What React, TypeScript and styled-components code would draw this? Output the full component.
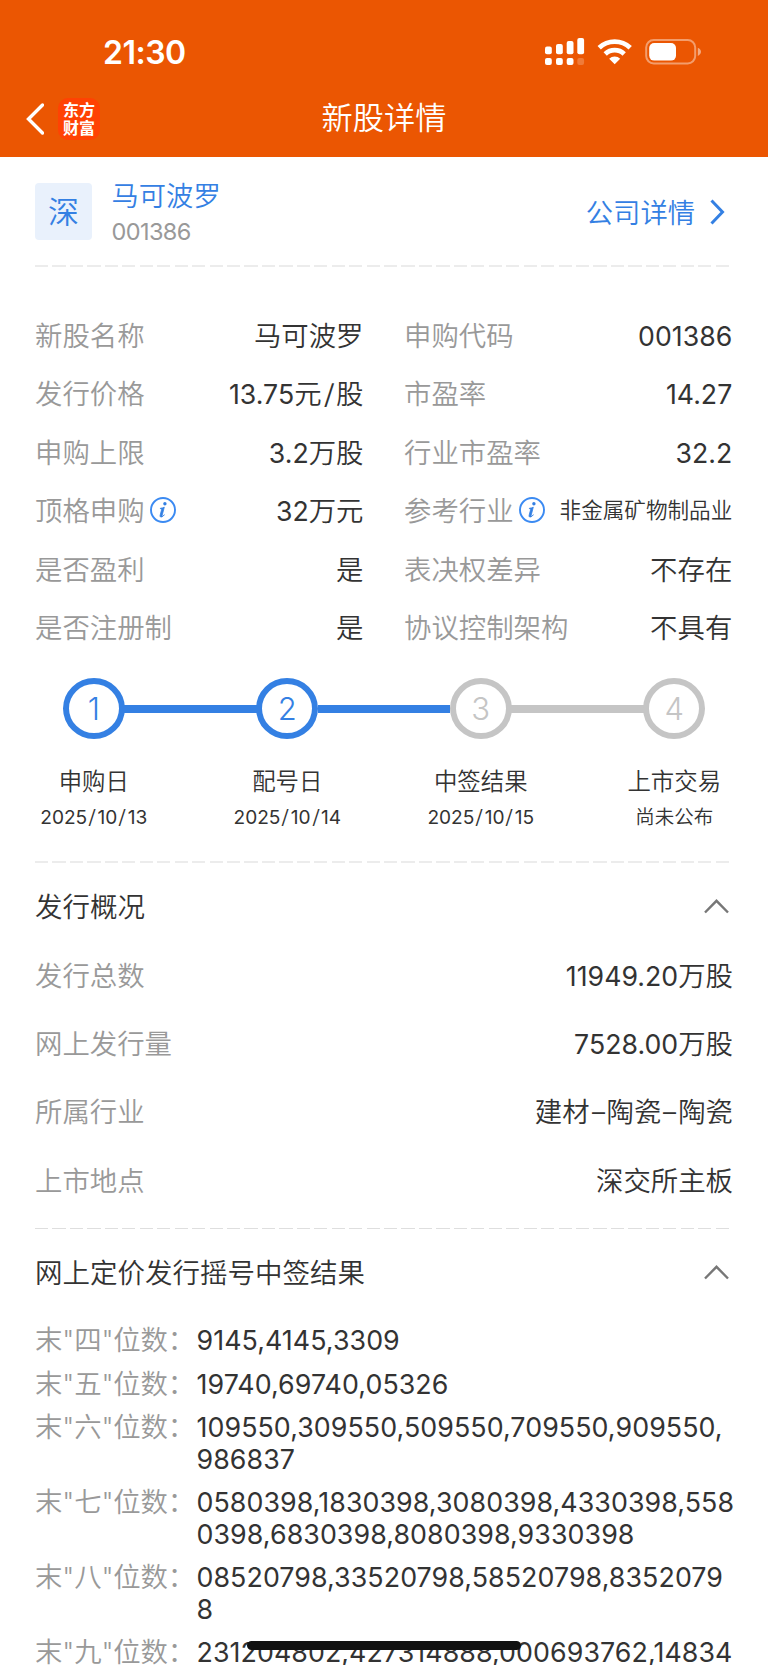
import React from "react";
import styled, { createGlobalStyle } from "styled-components";

const BLUE = "#3480e3";
const GREY = "#999999";
const INK = "#333333";

const GlobalStyle = createGlobalStyle`
  * { box-sizing: border-box; }
  body {
    margin: 0;
    background: #fff;
    font-family: Inter, "Noto Sans CJK SC", sans-serif;
    font-weight: 350;
    color: ${INK};
    overflow: hidden;
  }
`;

const Screen = styled.div`
  position: relative;
  width: 768px;
  height: 1665px;
  overflow: hidden;
  background: #fff;
`;

const Header = styled.header`
  height: 157.3px;
  background: #eb5602;
  color: #fff;
`;

const StatusBar = styled.div`
  display: flex;
  justify-content: space-between;
  height: 88px;
  padding: 33px 67px 0 103px;
`;

const Clock = styled.div`
  font-size: 32px;
  font-weight: 600;
  line-height: 40px;
  letter-spacing: -0.5px;
`;

const StatusIcons = styled.svg`
  width: 158px;
  height: 30px;
  margin-top: 3px;
`;

const NavBar = styled.div`
  display: grid;
  grid-template-columns: 200px 1fr 200px;
  align-items: center;
  height: 61px;
`;

const BackGroup = styled.div`
  display: flex;
  align-items: center;
  gap: 14px;
  padding-left: 26px;
`;

const AppLogo = styled.div`
  display: flex;
  flex-direction: column;
  align-items: center;
  justify-content: center;
  width: 42px;
  height: 42px;
  border-radius: 10px;
  background: #ff4203;
  font-family: "Noto Sans CJK SC", sans-serif;
  font-size: 16px;
  font-weight: 700;
  line-height: 18px;
  padding-bottom: 1px;
`;

const PageTitle = styled.h1`
  margin: -2px 0 0;
  text-align: center;
  font-size: 31.2px;
  font-weight: 350;
  line-height: 40px;
`;

const Company = styled.section`
  display: flex;
  align-items: flex-start;
  height: 107.7px;
  padding: 25.7px 43px 0 35px;
  color: ${BLUE};
`;

const MarketBadge = styled.div`
  width: 57px;
  height: 57px;
  border-radius: 4px;
  background: #e9f1fc;
  font-size: 31px;
  line-height: 57px;
  text-align: center;
`;

const CompanyText = styled.div`
  flex: 1;
  margin: -4px 0 0 19.5px;
`;

const CompanyName = styled.div`
  font-size: 27.3px;
  line-height: 36px;
`;

const CompanyCode = styled.div`
  font-size: 23.5px;
  font-weight: 400;
  line-height: 34px;
  color: ${GREY};
  letter-spacing: -0.6px;
`;

const CompanyLink = styled.a`
  display: flex;
  align-items: center;
  gap: 15px;
  height: 56px;
  font-size: 27.3px;

  svg {
    margin-top: 3px;
  }
`;

const Dashes = styled.div<{ $thin?: boolean }>`
  height: ${(p) => (p.$thin ? 1 : 2)}px;
  margin: 0 39px 0 35px;
  background: repeating-linear-gradient(
    90deg,
    ${(p) => (p.$thin ? "#dedede" : "#ececec")} 0 13.2px,
    transparent 13.2px 17.45px
  );
`;

const Facts = styled.dl`
  display: grid;
  grid-template-columns: 328.5px 328.3px;
  column-gap: 40.5px;
  grid-auto-rows: 58.5px;
  margin: 0;
  padding: 39.5px 0 0 35px;
`;

const Fact = styled.div`
  display: flex;
  align-items: center;
  justify-content: space-between;
  white-space: nowrap;
`;

const Label = styled.dt`
  display: flex;
  align-items: center;
  gap: 5px;
  color: ${GREY};
  font-size: 27.4px;
  line-height: 40px;

  svg {
    margin-top: -2px;
  }
`;

const Value = styled.dd<{ $small?: boolean }>`
  margin: 0;
  padding-bottom: ${(p) => (p.$small ? 2 : 0)}px;
  font-size: ${(p) => (p.$small ? 21.6 : 27.4)}px;
  line-height: 40px;
`;

const Num = styled.span`
  font-size: 26.7px;
  font-weight: 400;
  letter-spacing: 0.03px;
`;

const Slash = styled.span`
  display: inline-block;
  transform: scaleX(1.2);
  padding: 0 0.09em;
`;

const EnDash = styled.span`
  display: inline-block;
  transform: scaleX(0.95);
  padding: 0 1.6px;
`;

const Steps = styled.ol`
  display: grid;
  grid-template-columns: repeat(4, 193.5px);
  height: 204px;
  margin: 0 0 0 -3px;
  padding: 20.5px 0 0;
  list-style: none;
`;

const Step = styled.li`
  display: flex;
  flex-direction: column;
  align-items: center;
`;

const Track = styled.div`
  display: grid;
  grid-template-columns: 1fr 61.4px 1fr;
  align-items: center;
  width: 100%;
`;

const Rail = styled.div<{ $color?: string }>`
  height: 8px;
  background: ${(p) => p.$color ?? "transparent"};
`;

const StepDot = styled.div<{ $done: boolean }>`
  height: 61.4px;
  margin: 0 -0.5px;
  border: 6px solid ${(p) => (p.$done ? BLUE : "#c5c5c5")};
  border-radius: 50%;
  color: ${(p) => (p.$done ? BLUE : "#c5c5c5")};
  font-size: 31px;
  font-weight: 300;
  line-height: 49.4px;
  text-align: center;
`;

const StepName = styled.div`
  margin-top: 27px;
  font-size: 23.4px;
  line-height: 32px;
`;

const StepDate = styled.div`
  margin-top: 3px;
  font-size: 19.5px;
  line-height: 32px;
`;

const DatePart = styled.span`
  font-size: 19.1px;
  font-weight: 400;
`;

const SectionHead = styled.div<{ $height: number }>`
  display: flex;
  justify-content: space-between;
  height: ${(p) => p.$height}px;
  padding: 24px 39px 0 35px;

  svg {
    margin-top: 12px;
  }
`;

const SectionTitle = styled.h2`
  margin: 0;
  font-size: 27.5px;
  font-weight: 350;
  line-height: 40px;
`;

const Overview = styled.dl`
  display: grid;
  grid-auto-rows: 68.3px;
  height: 287px;
  margin: 0;
  padding: 0 35px;
`;

const Lottery = styled.dl`
  display: flex;
  flex-direction: column;
  gap: 12.2px;
  margin: 0;
  padding: 5px 0 0 35px;
`;

const LotteryRow = styled.div`
  display: grid;
  grid-template-columns: 161.5px 540px;
  line-height: 31.4px;
  white-space: nowrap;
`;

const LotteryLabel = styled.dt`
  color: ${GREY};
  font-size: 27.4px;
  letter-spacing: -0.15px;
`;

const LotteryValue = styled.dd`
  margin: 0;
  font-size: 26.8px;
  font-weight: 400;
  letter-spacing: 0.07px;
`;

const Line = styled.div``;

const HomeBar = styled.div`
  position: absolute;
  left: 247px;
  top: 1641.3px;
  width: 274px;
  height: 8.7px;
  border-radius: 5px;
  background: #111;
`;

const InfoIcon = () => (
  <svg width="26" height="26" viewBox="0 0 26 26" fill="none">
    <circle cx="13" cy="13" r="12" stroke="#3b8af2" strokeWidth="1.9" />
    <circle cx="14.9" cy="6.7" r="1.7" fill="#3480e3" />
    <path
      d="M10.3 11.3c1.5-.2 2.7-.6 4-1.1l-2.2 8.3c-.3 1.1.5 1.2 2.2-.8-1 1.9-4.7 3.9-4.2.6l1.4-5.3c.3-1 .1-1.4-1.2-1.3z"
      fill="#3480e3"
      stroke="#3480e3"
      strokeWidth=".8"
    />
  </svg>
);

const ChevronUp = () => (
  <svg width="25" height="15" viewBox="0 0 25 15" fill="none">
    <path d="M1 13.5 12.5 1.8 24 13.5" stroke="#777" strokeWidth="2.4" />
  </svg>
);

// Numeric runs, slashes and dashes are set apart from the Chinese text.
const Mixed = ({ text }: { text: string }) => (
  <>
    {text.split(/([0-9.]+|\/|–)/).map((part, i) => {
      if (part === "/") return <Slash key={i}>/</Slash>;
      if (part === "–") return <EnDash key={i}>–</EnDash>;
      if (/[0-9]/.test(part)) return <Num key={i}>{part}</Num>;
      return part;
    })}
  </>
);

const DateText = ({ text }: { text: string }) => (
  <>
    {text.split("/").map((part, i) => (
      <React.Fragment key={i}>
        {i > 0 && <Slash>/</Slash>}
        {/[0-9]/.test(part) ? <DatePart>{part}</DatePart> : part}
      </React.Fragment>
    ))}
  </>
);

type FactItem = { label: string; value: string; info?: boolean; small?: boolean };

const facts: FactItem[] = [
  { label: "新股名称", value: "马可波罗" },
  { label: "申购代码", value: "001386" },
  { label: "发行价格", value: "13.75元/股" },
  { label: "市盈率", value: "14.27" },
  { label: "申购上限", value: "3.2万股" },
  { label: "行业市盈率", value: "32.2" },
  { label: "顶格申购", value: "32万元", info: true },
  { label: "参考行业", value: "非金属矿物制品业", info: true, small: true },
  { label: "是否盈利", value: "是" },
  { label: "表决权差异", value: "不存在" },
  { label: "是否注册制", value: "是" },
  { label: "协议控制架构", value: "不具有" },
];

const steps = [
  { name: "申购日", date: "2025/10/13", done: true },
  { name: "配号日", date: "2025/10/14", done: true },
  { name: "中签结果", date: "2025/10/15", done: false },
  { name: "上市交易", date: "尚未公布", done: false },
];

const overview: FactItem[] = [
  { label: "发行总数", value: "11949.20万股" },
  { label: "网上发行量", value: "7528.00万股" },
  { label: "所属行业", value: "建材–陶瓷–陶瓷" },
  { label: "上市地点", value: "深交所主板" },
];

const lottery: { digit: string; lines: string[] }[] = [
  { digit: "四", lines: ["9145,4145,3309"] },
  { digit: "五", lines: ["19740,69740,05326"] },
  { digit: "六", lines: ["109550,309550,509550,709550,909550,", "986837"] },
  { digit: "七", lines: ["0580398,1830398,3080398,4330398,558", "0398,6830398,8080398,9330398"] },
  { digit: "八", lines: ["08520798,33520798,58520798,8352079", "8"] },
  { digit: "九", lines: ["231204802,427314888,000693762,14834"] },
];

const railColor = (i: number) =>
  i < 0 || i > 2 ? undefined : steps[i].done ? BLUE : "#c5c5c5";

export default function App() {
  return (
    <Screen>
      <GlobalStyle />
      <Header>
        <StatusBar>
          <Clock>21:30</Clock>
          <StatusIcons viewBox="543 36 158 30" fill="#fff">
            <rect x="545" y="46.5" width="6.8" height="7.8" rx="2" />
            <rect x="556" y="44" width="6.8" height="10.3" rx="2" />
            <rect x="566.7" y="41" width="6.8" height="13.3" rx="2" />
            <rect x="577.3" y="38" width="6.8" height="16.3" rx="2" />
            <rect x="545" y="58" width="6.8" height="7" rx="2" />
            <rect x="556" y="58" width="6.8" height="7" rx="2" />
            <rect x="566.7" y="58" width="6.8" height="7" rx="2" />
            <rect x="577.3" y="58" width="6.8" height="7" rx="2" opacity=".22" />
            <g fill="none" stroke="#fff" strokeWidth="4.8">
              <path d="M599.2 47.8a22.6 22.6 0 0 1 31 0" />
              <path d="M605.2 54a13.8 13.8 0 0 1 19 0" />
            </g>
            <path d="M614.7 64.2 609.2 58.7a7.8 7.8 0 0 1 11 0z" />
            <rect x="646.2" y="40.1" width="49" height="23.4" rx="7.5" fill="none" stroke="#fff" strokeWidth="2" opacity=".42" />
            <rect x="649.2" y="43" width="26.8" height="17.6" rx="5" />
            <path d="M697.8 47.7c4.2 1.6 4.2 6.6 0 8.2z" opacity=".5" />
          </StatusIcons>
        </StatusBar>
        <NavBar>
          <BackGroup>
            <svg width="18" height="32" viewBox="0 0 18 32" fill="none">
              <path d="M16.5 2 2.5 16l14 14" stroke="#fff" strokeWidth="3.4" strokeLinecap="round" />
            </svg>
            <AppLogo>
              <span>东方</span>
              <span>财富</span>
            </AppLogo>
          </BackGroup>
          <PageTitle>新股详情</PageTitle>
        </NavBar>
      </Header>

      <Company>
        <MarketBadge>深</MarketBadge>
        <CompanyText>
          <CompanyName>马可波罗</CompanyName>
          <CompanyCode>001386</CompanyCode>
        </CompanyText>
        <CompanyLink>
          公司详情
          <svg width="15" height="26" viewBox="0 0 15 26" fill="none">
            <path d="M1.5 1.5 12.5 13l-11 11.5" stroke={BLUE} strokeWidth="3" />
          </svg>
        </CompanyLink>
      </Company>
      <Dashes />

      <Facts>
        {facts.map((f) => (
          <Fact key={f.label}>
            <Label>
              {f.label}
              {f.info && <InfoIcon />}
            </Label>
            <Value $small={f.small}>
              <Mixed text={f.value} />
            </Value>
          </Fact>
        ))}
      </Facts>

      <Steps>
        {steps.map((s, i) => (
          <Step key={s.name}>
            <Track>
              <Rail $color={railColor(i - 1)} />
              <StepDot $done={s.done}>{i + 1}</StepDot>
              <Rail $color={railColor(i)} />
            </Track>
            <StepName>{s.name}</StepName>
            <StepDate>
              <DateText text={s.date} />
            </StepDate>
          </Step>
        ))}
      </Steps>
      <Dashes />

      <SectionHead $height={78}>
        <SectionTitle>发行概况</SectionTitle>
        <ChevronUp />
      </SectionHead>
      <Overview>
        {overview.map((o) => (
          <Fact key={o.label}>
            <Label>{o.label}</Label>
            <Value>
              <Mixed text={o.value} />
            </Value>
          </Fact>
        ))}
      </Overview>
      <Dashes $thin />

      <SectionHead $height={90.5}>
        <SectionTitle>网上定价发行摇号中签结果</SectionTitle>
        <ChevronUp />
      </SectionHead>
      <Lottery>
        {lottery.map((row) => (
          <LotteryRow key={row.digit}>
            <LotteryLabel>末"{row.digit}"位数：</LotteryLabel>
            <LotteryValue>
              {row.lines.map((line) => (
                <Line key={line}>{line}</Line>
              ))}
            </LotteryValue>
          </LotteryRow>
        ))}
      </Lottery>
      <HomeBar />
    </Screen>
  );
}
